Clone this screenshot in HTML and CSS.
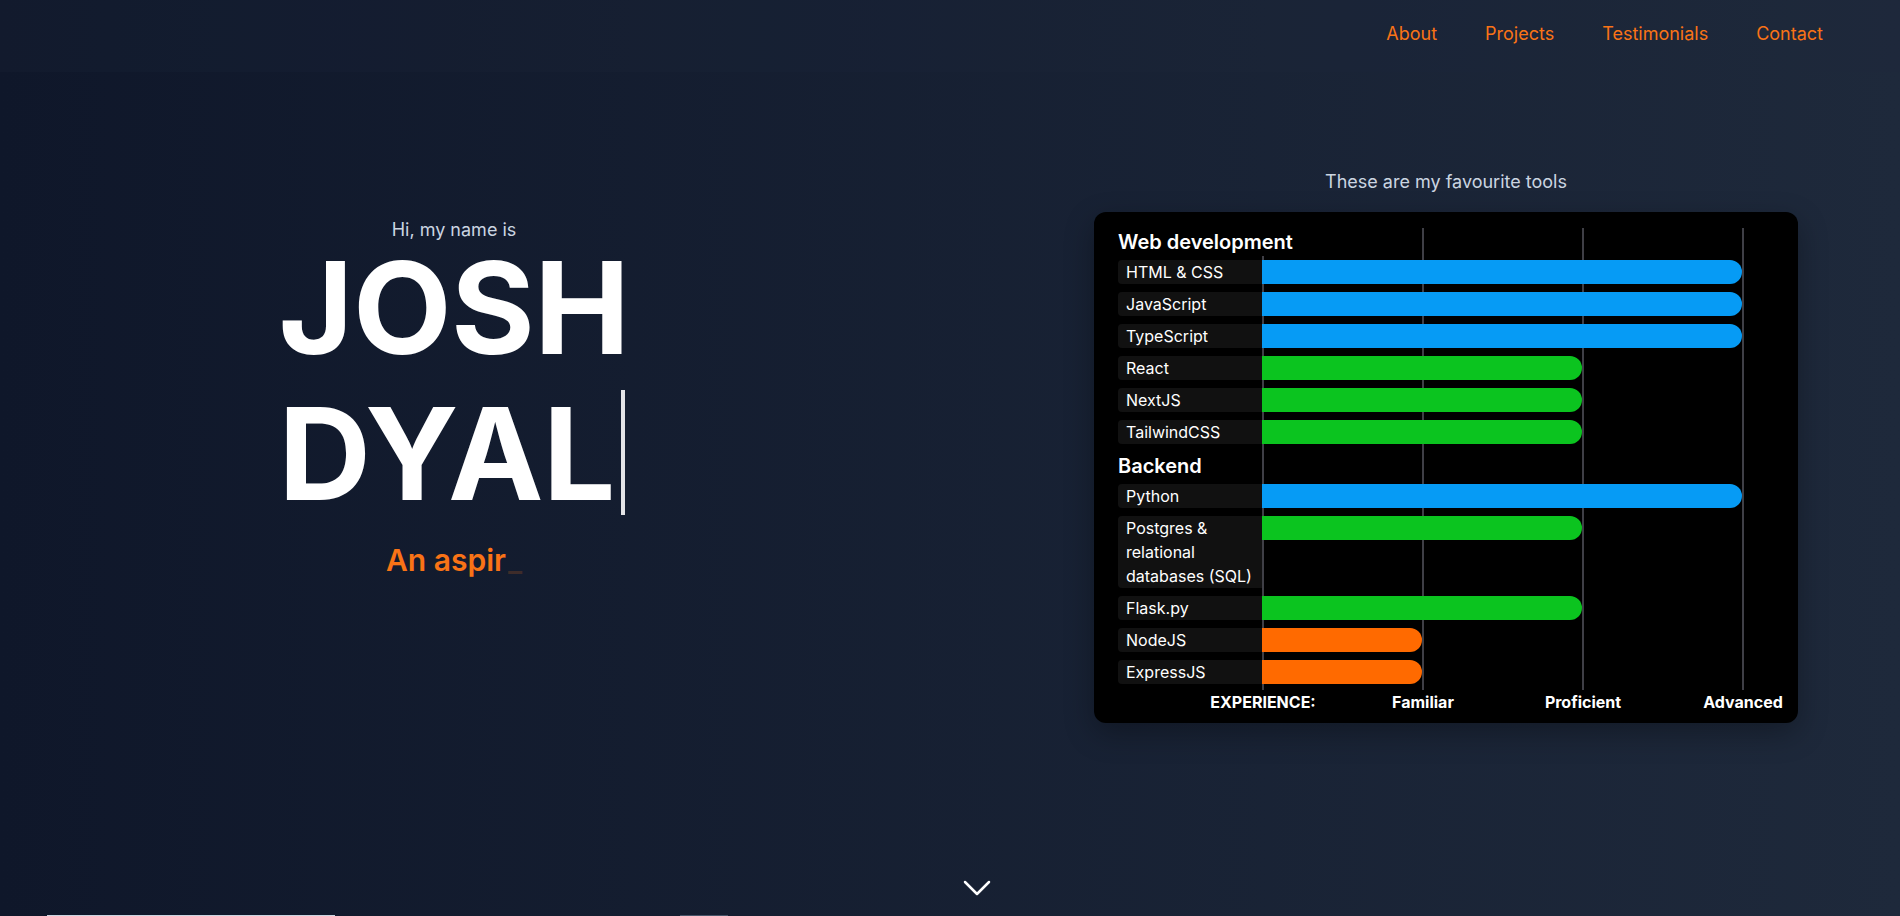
FILE: index.html
```html
<!DOCTYPE html>
<html lang="en">
<head>
<meta charset="utf-8">
<title>Josh Dyal</title>
<link rel="stylesheet" href="styles.css">
</head>
<body>
<header class="site-header">
  <nav class="nav">
    <a href="#about">About</a>
    <a href="#projects">Projects</a>
    <a href="#testimonials">Testimonials</a>
    <a href="#contact">Contact</a>
  </nav>
</header>
<main class="hero">
  <div class="hero-row">
    <section class="intro">
      <p class="greeting">Hi, my name is</p>
      <h1 class="name"><span class="name-line">JOSH</span><span class="name-line name-line-2">DYAL<span class="caret"></span></span></h1>
      <p class="tagline">An aspir<span class="underscore">_</span></p>
    </section>
    <section class="tools">
      <p class="tools-title">These are my favourite tools</p>
      <div class="card">
        <div class="chart">
          <h2 class="group">Web development</h2>
          <div class="row"><span class="label">HTML &amp; CSS</span><span class="bar blue lvl-3"></span></div>
          <div class="row"><span class="label">JavaScript</span><span class="bar blue lvl-3"></span></div>
          <div class="row"><span class="label">TypeScript</span><span class="bar blue lvl-3"></span></div>
          <div class="row"><span class="label">React</span><span class="bar green lvl-2"></span></div>
          <div class="row"><span class="label">NextJS</span><span class="bar green lvl-2"></span></div>
          <div class="row"><span class="label">TailwindCSS</span><span class="bar green lvl-2"></span></div>
          <h2 class="group">Backend</h2>
          <div class="row"><span class="label">Python</span><span class="bar blue lvl-3"></span></div>
          <div class="row"><span class="label">Postgres &amp; relational databases (SQL)</span><span class="bar green lvl-2"></span></div>
          <div class="row"><span class="label">Flask.py</span><span class="bar green lvl-2"></span></div>
          <div class="row"><span class="label">NodeJS</span><span class="bar orange lvl-1"></span></div>
          <div class="row"><span class="label">ExpressJS</span><span class="bar orange lvl-1"></span></div>
        </div>
        <div class="axis">
          <span>EXPERIENCE:</span>
          <span>Familiar</span>
          <span>Proficient</span>
          <span>Advanced</span>
        </div>
      </div>
    </section>
  </div>
  <div class="scroll-cue">
    <svg width="28" height="16" viewBox="0 0 28 16" aria-hidden="true"><polyline points="2,2 14,14 26,2" fill="none" stroke="#ffffff" stroke-width="2.5" stroke-linecap="round" stroke-linejoin="round"/></svg>
  </div>
</main>
<div class="next">
  <span class="next-a"></span>
  <span class="next-b"></span>
</div>
</body>
</html>
```
FILE: styles.css
```css
html, body {
  margin: 0;
  padding: 0;
}

body {
  font-family: Inter, "Noto Sans", "Liberation Sans", sans-serif;
  color: #ffffff;
  background: linear-gradient(to right, #0f172a, #1e293b);
}

.site-header {
  height: 72px;
  box-sizing: border-box;
  padding: 20px 77px 0 0;
  background: rgba(30, 41, 59, 0.2);
}

.nav {
  display: flex;
  justify-content: flex-end;
  gap: 48px;
}

.nav a {
  color: #f97316;
  text-decoration: none;
  font-size: 18px;
  line-height: 28px;
}

.hero {
  height: 843px;
  display: flex;
  flex-direction: column;
}

.hero-row {
  flex: 1;
  display: flex;
  align-items: flex-start;
}

.intro {
  width: 908px;
  padding-top: 144px;
  text-align: center;
}

.greeting {
  margin: 0;
  font-size: 18px;
  line-height: 28px;
  color: #cbd5e1;
}

.name {
  display: inline-block;
  margin: 0;
  text-align: left;
  font-size: 128px;
  font-weight: 700;
  letter-spacing: -0.5px;
  color: #ffffff;
}

.name-line {
  display: block;
  line-height: 128px;
}

.name-line-2 {
  margin-top: 18px;
}

.caret {
  display: inline-block;
  width: 4px;
  height: 125px;
  margin-left: 6px;
  vertical-align: -15px;
  background: #e4e4e7;
}

.tagline {
  margin: 24px 0 0;
  font-size: 30px;
  line-height: 36px;
  font-weight: 600;
  color: #f97316;
}

.underscore {
  margin-left: 2px;
  color: rgba(249, 115, 22, 0.2);
}

.tools {
  width: 704px;
  margin-left: 186px;
  padding-top: 96px;
}

.tools-title {
  margin: 0 0 16px;
  text-align: center;
  font-size: 18px;
  line-height: 28px;
  color: #cbd5e1;
}

.card {
  box-sizing: border-box;
  width: 704px;
  padding: 16px 24px 9px;
  background: #000000;
  border-radius: 12px;
  box-shadow: 0 10px 30px rgba(0, 0, 0, 0.3);
}

.chart {
  padding-bottom: 6px;
  background-image:
    linear-gradient(#3f3f46, #3f3f46),
    linear-gradient(#3f3f46, #3f3f46),
    linear-gradient(#3f3f46, #3f3f46),
    linear-gradient(#3f3f46, #3f3f46);
  background-size:
    2px calc(100% - 28px),
    2px 100%,
    2px 100%,
    2px 100%;
  background-position:
    144px 28px,
    304px 0,
    464px 0,
    624px 0;
  background-repeat: no-repeat;
}

.group {
  margin: 0 0 4px;
  font-size: 20px;
  line-height: 28px;
  font-weight: 600;
}

.row + .group {
  margin-top: 8px;
}

.row {
  display: flex;
  align-items: flex-start;
}

.row + .row {
  margin-top: 8px;
}

.label {
  flex: 0 0 144px;
  box-sizing: border-box;
  padding: 0 4px 0 8px;
  background: #111111;
  border-radius: 4px 0 0 4px;
  font-size: 16px;
  line-height: 24px;
}

.bar {
  height: 24px;
  border-radius: 0 12px 12px 0;
}

.lvl-1 { width: 160px; }
.lvl-2 { width: 320px; }
.lvl-3 { width: 480px; }

.blue { background: #069bf5; }
.green { background: #0bc41f; }
.orange { background: #ff6a00; }

.axis {
  display: flex;
  gap: 160px;
  padding-left: 145px;
  font-size: 16px;
  line-height: 24px;
  font-weight: 700;
}

.axis span {
  width: 0;
  display: flex;
  justify-content: center;
  white-space: nowrap;
}

.scroll-cue {
  height: 16px;
  margin-bottom: 19px;
  padding-left: 54px;
}

.scroll-cue svg {
  display: block;
  margin: 0 auto;
}

.next {
  height: 1px;
  overflow: hidden;
  display: flex;
}

.next-a {
  margin-left: 47px;
  width: 288px;
  background: #cbd5e1;
}

.next-b {
  margin-left: 345px;
  width: 48px;
  background: #475569;
}
```
